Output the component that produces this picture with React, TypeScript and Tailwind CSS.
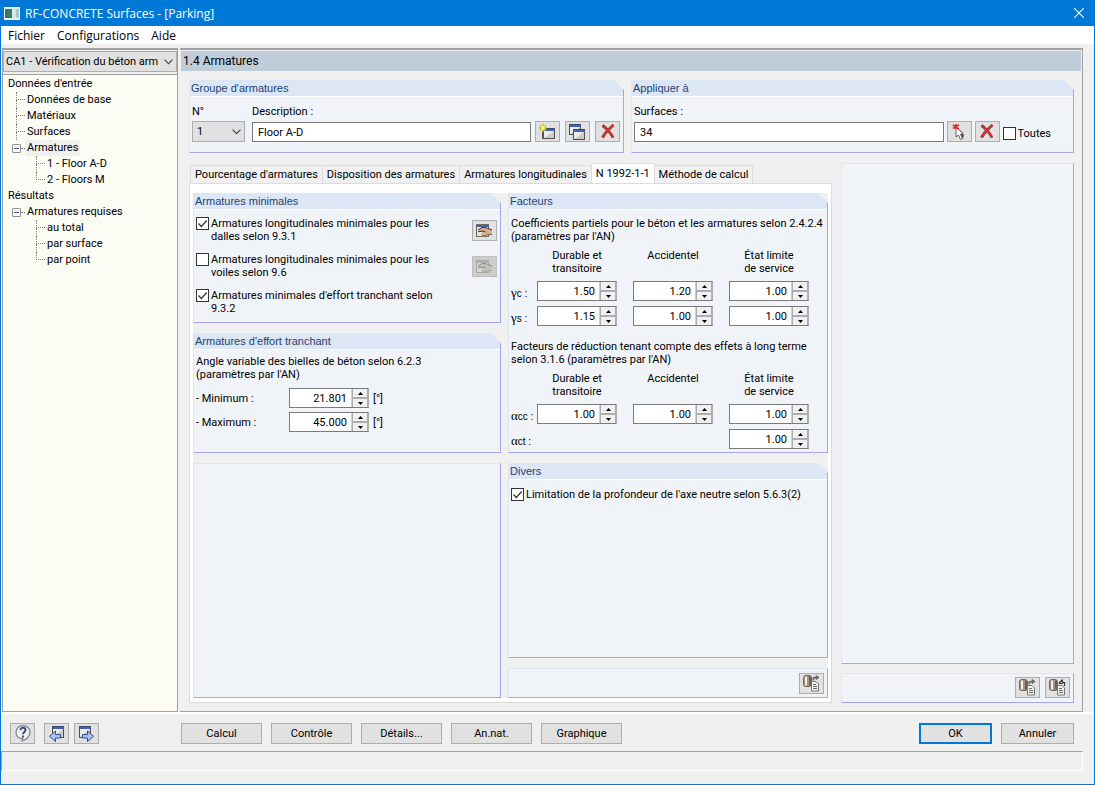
import { useState } from "react";
import type { ReactNode } from "react";
import clsx from "clsx";

const tabs = [
  "Pourcentage d'armatures",
  "Disposition des armatures",
  "Armatures longitudinales",
  "N 1992-1-1",
  "Méthode de calcul",
];

const columns = [
  ["Durable et", "transitoire"],
  ["Accidentel", ""],
  ["État limite", "de service"],
];

const actions = ["Calcul", "Contrôle", "Détails...", "An.nat.", "Graphique"];

/* ---------- icons ---------- */

function AppIcon() {
  return (
    <svg width="16" height="13" viewBox="0 0 16 13">
      <rect x="0.5" y="0.5" width="15" height="12" fill="#e4eef0" stroke="#f4f8fa" />
      <rect x="1" y="2" width="7" height="9" fill="#2f7f68" />
      <path d="M1 2h2.500v9H1z" fill="#4a6670" />
      <path d="M9 2h3v9H9z" fill="#d6e6d6" />
      <path d="M12 2h3v9h-3z" fill="#a9c9c4" />
    </svg>
  );
}

function MiniWindow({ x, y, w = 11, h = 10 }: { x: number; y: number; w?: number; h?: number }) {
  return (
    <g>
      <rect x={x + 0.5} y={y + 0.5} width={w} height={h} fill="#ececec" stroke="#505050" />
      <path d={`M${x + 1} ${y + h}L${x + w} ${y + 3}v${h - 3}z`} fill="#cccccc" />
      <rect x={x + 1} y={y + 0.5} width={w} height="2.5" fill="#4460b4" />
      <path d={`M${x} ${y + 0.5}h${w + 1}`} stroke="#3a4668" />
    </g>
  );
}

function NewIcon() {
  return (
    <svg width="17" height="16" viewBox="0 0 17 16">
      <path d="M3.500 8v6.500H5" fill="none" stroke="#555" />
      <MiniWindow x={4} y={4} />
      <path d="M4 0v8M0 4h8M1.200 1.200l5.600 5.600M6.800 1.200L1.200 6.800" stroke="#b5b820" strokeWidth="1.300" />
      <circle cx="4" cy="4" r="2.200" fill="#f7f25a" />
    </svg>
  );
}

function CopyIcon() {
  return (
    <svg width="17" height="16" viewBox="0 0 17 16">
      <MiniWindow x={0} y={0} />
      <MiniWindow x={4} y={5} />
    </svg>
  );
}

function DeleteIcon() {
  return (
    <svg width="14" height="15" viewBox="0 0 14 15">
      <path d="M1.500 1.500C4 3 10 9 12 13.500M12.500 1C9 4 4 9 1.500 13.500" stroke="#6e2a2a" strokeWidth="2.800" fill="none" />
      <path d="M1.500 1.500C4 3 10 9 12 13.500M12.500 1C9 4 4 9 1.500 13.500" stroke="#dc3434" strokeWidth="1.800" fill="none" />
    </svg>
  );
}

function PickIcon() {
  return (
    <svg width="14" height="16" viewBox="0 0 14 16">
      <path d="M8 6l4 4.500-1 4.500-3-3z" fill="#555" />
      <path d="M4 3v10l2.500-2 2 4.500 2-1-2-4.200 2.500-.8z" fill="#fff" stroke="#555" strokeWidth="0.900" />
      <path d="M.8 1l6 4M7 .8L1 4.500M4 0v5" stroke="#d93030" strokeWidth="1.700" />
    </svg>
  );
}

function HandIcon({ muted = false }: { muted?: boolean }) {
  return (
    <svg width="17" height="14" viewBox="0 0 17 14">
      <rect x="0.500" y="0.500" width="12" height="12" fill={muted ? "#d8d8d6" : "#e6e6e6"} stroke={muted ? "#aaaaa6" : "#6a6a6a"} />
      <path d="M1 1h12v2H1z" fill={muted ? "#b0b0ae" : "#4a63a8"} />
      <path d="M2 6l4-2.500 4 .2 6 2.300v4.500l-4 .2-2.500 1.600H6l-1-2 1.500-2.300L2.500 8z" fill={muted ? "#c2c2be" : "#d9b08c"} />
      <path
        d="M2 6l4-2.500 4 .2 6 2.300M2.200 7.800L7 7l2.500 1"
        stroke={muted ? "#8e8e8a" : "#43332a"}
        fill="none"
      />
      <path d="M6 11.800h3.500l2.500-1.300 4 .2" stroke={muted ? "#a2a29e" : "#7c604a"} fill="none" />
    </svg>
  );
}

function ReportIcon({ up = false }: { up?: boolean }) {
  return (
    <svg width="17" height="17" viewBox="0 0 17 17">
      <rect x="0.500" y="0.500" width="8" height="11" rx="2.500" fill="#a39382" stroke="#6d645c" />
      <path d="M3 1.500v9" stroke="#fffaf0" strokeWidth="1.800" />
      <path d="M7 1.500v9" stroke="#5c5148" strokeWidth="1.500" />
      <path d="M8.500 6.500h4.500l2.500 2.500v7h-7z" fill="#f4f4f4" stroke="#777" />
      <path d="M10 9.500h3M10 11.500h4M10 13.500h4" stroke="#666" />
      {up ? (
        <path d="M10 4.500l3-3.500 1 2.500h1.500V7M10 4.500h4" stroke="#333" strokeWidth="1.200" fill="none" />
      ) : (
        <path d="M10 5.500v-3h3M13 .5v4l3-2z" stroke="#666" fill="#777" />
      )}
    </svg>
  );
}

function HelpIcon() {
  return (
    <svg width="16" height="17" viewBox="0 0 16 17">
      <path d="M8 .7c4 0 7 2.700 7 6.500 0 4-3 7-8.500 9 1-1 1.500-1.700 1.300-2.500C3.500 13.500 1 11 1 7.300 1 3.500 4 .7 8 .7z" fill="#f0f0f0" stroke="#858585" strokeWidth="1.300" />
      <path d="M5.500 5.200C5.500 3.500 6.600 2.800 8 2.800s2.500.8 2.500 2.200C10.500 7 8 7 8 9.200M8 10.500v2" fill="none" stroke="#34477f" strokeWidth="1.900" />
    </svg>
  );
}

function StepIcon({ next = false }: { next?: boolean }) {
  return (
    <svg width="17" height="16" viewBox="0 0 17 16">
      <MiniWindow x={next ? 1 : 4} y={0} w={11} h={11} />
      <path
        d={next ? "M4.500 8.500h5v-3.500l6 5.300-6 5.200v-3.500h-5z" : "M12.500 8.500h-5v-3.500l-6 5.300 6 5.200v-3.500h5z"}
        fill="#a9c2f2"
        stroke="#2f4c90"
      />
    </svg>
  );
}

function Chevron() {
  return (
    <svg width="9" height="6" viewBox="0 0 9 6" className="pointer-events-none absolute right-1 top-1/2 -translate-y-1/2">
      <path d="M0.500 0.700l4 4 4-4" fill="none" stroke="#444" strokeWidth="1.100" />
    </svg>
  );
}

/* ---------- controls ---------- */

function ToolButton({ label, disabled, children }: { label: string; disabled?: boolean; children: ReactNode }) {
  return (
    <button
      type="button"
      aria-label={label}
      disabled={disabled}
      className={clsx(
        "flex h-[21px] w-[25px] shrink-0 items-center justify-center border",
        disabled ? "border-[#bfbfbf] bg-[#cccccc]" : "border-[#adadad] bg-[#e1e1e1]"
      )}
    >
      {children}
    </button>
  );
}

function PushButton({ children, primary }: { children: ReactNode; primary?: boolean }) {
  return (
    <button
      type="button"
      className={clsx("h-[21px] min-w-[73px] bg-[#e1e1e1]", primary ? "border-2 border-[#0078d7]" : "border border-[#adadad]")}
    >
      {children}
    </button>
  );
}

function Check({ id, checked = false, children }: { id: string; checked?: boolean; children: ReactNode }) {
  return (
    <div className="flex gap-[2px]">
      <span className="relative size-[13px] shrink-0">
        <input
          id={id}
          type="checkbox"
          defaultChecked={checked}
          className="peer block size-[13px] appearance-none border border-[#333] bg-white"
        />
        <svg viewBox="0 0 13 13" className="pointer-events-none absolute inset-0 hidden peer-checked:block">
          <path d="M2.500 6.500l2.800 3 5.400-6" fill="none" stroke="#333" strokeWidth="1.200" />
        </svg>
      </span>
      <label htmlFor={id}>{children}</label>
    </div>
  );
}

function Spin({ label, value, step = 0.01 }: { label: string; value: string; step?: number }) {
  const [v, setV] = useState(value);
  const digits = value.split(".")[1].length;
  const bump = (d: number) => setV((Number(v) + d).toFixed(digits));

  return (
    <div className="flex h-5 w-20 border border-[#7a7a7a] border-r-[#adadad] bg-white">
      <input
        aria-label={label}
        value={v}
        onChange={(e) => setV(e.target.value)}
        className="w-full min-w-0 flex-1 pr-1 text-right outline-none"
      />
      <div className="flex w-[17px] shrink-0 flex-col border-l border-[#d0d0d0] bg-[#f0f0f0]">
        <button type="button" aria-label={`${label} +`} onClick={() => bump(step)} className="flex flex-1 items-center justify-center border-x border-b border-[#adadad]">
          <svg width="5" height="3" viewBox="0 0 5 3"><path d="M0 3L2.500 0 5 3z" /></svg>
        </button>
        <button type="button" aria-label={`${label} -`} onClick={() => bump(-step)} className="flex flex-1 items-center justify-center border-x border-t border-[#adadad]">
          <svg width="5" height="3" viewBox="0 0 5 3"><path d="M0 0h5L2.500 3z" /></svg>
        </button>
      </div>
    </div>
  );
}

function Group({ title, className, children }: { title?: string; className?: string; children?: ReactNode }) {
  return (
    <section
      className={clsx(
        "flex flex-col border-b border-l border-r border-b-[#a6a6ee] border-l-[#dce6f5] border-r-[#a6a6ee] bg-[#f0f4f9]",
        title ? "[clip-path:polygon(0_0,calc(100%-10px)_0,100%_10px,100%_100%,0_100%)]" : "border-t border-t-[#dce6f5]",
        className
      )}
    >
      {title && (
        <h2 className="h-[17px] border-b border-white bg-[#dce6f5] pl-px font-['Liberation_Sans',sans-serif] leading-4 text-[#1e4471]">
          {title}
        </h2>
      )}
      {children}
    </section>
  );
}

/* ---------- navigation tree ---------- */

function Branch({ last = false }: { last?: boolean }) {
  return (
    <span className="flex h-4 w-[9px] shrink-0 flex-col">
      <span className="h-2 border-b border-l border-dotted border-[#808080]" />
      <span className={clsx("h-2", !last && "border-l border-dotted border-[#808080]")} />
    </span>
  );
}

function Leaf({ children, last }: { children: ReactNode; last?: boolean }) {
  return (
    <li className="flex h-4 items-center">
      <Branch last={last} />
      <a href="#" className="px-[2px]">{children}</a>
    </li>
  );
}

function Parent({ label, active, children }: { label: string; active?: boolean; children: ReactNode }) {
  return (
    <li className="-ml-1">
      <div className="flex h-4 items-center">
        <button type="button" aria-label={`Réduire ${label}`} className="flex size-[9px] items-center justify-center rounded-[1px] border border-[#919191] bg-white">
          <span className="h-px w-[5px] bg-[#3a55a0]" />
        </button>
        <span className="w-1 border-b border-dotted border-[#808080]" />
        <a href="#" className={clsx("px-[2px] leading-4", active && "bg-[#f0f0f0]")}>{label}</a>
      </div>
      <ul className="ml-6">{children}</ul>
    </li>
  );
}

function Sidebar() {
  return (
    <aside className="flex w-44 shrink-0 flex-col border border-t-2 border-[#a0a0a0] bg-[#f0f0f0]">
      <div className="relative mt-px mb-[2px]">
        <select aria-label="Cas d'étude" className="block h-[21px] w-full appearance-none border border-[#adadad] bg-[#e1e1e1] pr-4 pl-[2px]">
          <option>CA1 - Vérification du béton arm</option>
        </select>
        <Chevron />
      </div>
      <nav className="flex-1 border-t border-[#a0a0a0] bg-[#fcfcf4] pt-px pl-[5px]">
        <ul className="leading-4">
          <li>
            Données d'entrée
            <ul className="ml-2">
              <Leaf>Données de base</Leaf>
              <Leaf>Matériaux</Leaf>
              <Leaf>Surfaces</Leaf>
              <Parent label="Armatures" active>
                <Leaf>1 - Floor A-D</Leaf>
                <Leaf last>2 - Floors M</Leaf>
              </Parent>
            </ul>
          </li>
          <li>
            Résultats
            <ul className="ml-2">
              <Parent label="Armatures requises">
                <Leaf>au total</Leaf>
                <Leaf>par surface</Leaf>
                <Leaf last>par point</Leaf>
              </Parent>
            </ul>
          </li>
        </ul>
      </nav>
    </aside>
  );
}

/* ---------- forms ---------- */

function Symbol({ letter, sub }: { letter: string; sub: string }) {
  return (
    <span className="flex items-baseline self-center">
      <span className="font-['Liberation_Serif',serif] text-[13px]">{letter}</span>
      <span className="pt-1 font-['Liberation_Sans',sans-serif] text-[10px]">{sub}&nbsp;:</span>
    </span>
  );
}

type Row = { letter: string; sub: string; values: (string | null)[] };

function FactorGrid({ rows }: { rows: Row[] }) {
  return (
    <div className="mt-[6px] grid grid-cols-[10px_80px_80px_80px] gap-x-4 gap-y-[5px]">
      <span />
      {columns.map(([a, b]) => (
        <span key={a} className="pb-px text-center">
          {a}
          <br />
          {b}
        </span>
      ))}
      {rows.map(({ letter, sub, values }) => [
        <Symbol key={sub} letter={letter} sub={sub} />,
        ...values.map((v, i) =>
          v ? <Spin key={sub + i} label={`${letter}${sub} ${columns[i].join(" ")}`} value={v} /> : <span key={sub + i} />
        ),
      ])}
    </div>
  );
}

function Factors() {
  return (
    <Group title="Facteurs" className="h-[260px]">
      <div className="pt-[7px] pl-[2px] whitespace-nowrap">
        <p>
          Coefficients partiels pour le béton et les armatures selon 2.4.2.4
          <br />
          (paramètres par l'AN)
        </p>
        <FactorGrid
          rows={[
            { letter: "γ", sub: "c", values: ["1.50", "1.20", "1.00"] },
            { letter: "γ", sub: "s", values: ["1.15", "1.00", "1.00"] },
          ]}
        />
        <p className="mt-[14px]">
          Facteurs de réduction tenant compte des effets à long terme
          <br />
          selon 3.1.6 (paramètres par l'AN)
        </p>
        <FactorGrid
          rows={[
            { letter: "α", sub: "cc", values: ["1.00", "1.00", "1.00"] },
            { letter: "α", sub: "ct", values: [null, null, "1.00"] },
          ]}
        />
      </div>
    </Group>
  );
}

function Shear() {
  return (
    <Group title="Armatures d'effort tranchant" className="h-[120px]">
      <div className="px-[2px] pt-[5px]">
        <p>
          Angle variable des bielles de béton selon 6.2.3
          <br />
          (paramètres par l'AN)
        </p>
        <div className="mt-[7px] grid grid-cols-[93px_80px_auto] items-center gap-y-1">
          <span>- Minimum :</span>
          <Spin label="Minimum" value="21.801" step={1} />
          <span className="pl-1">[°]</span>
          <span>- Maximum :</span>
          <Spin label="Maximum" value="45.000" step={1} />
          <span className="pl-1">[°]</span>
        </div>
      </div>
    </Group>
  );
}

function Minimal() {
  return (
    <Group title="Armatures minimales" className="h-[130px]">
      <div className="flex flex-col pt-[7px] pr-[3px] pl-[2px]">
        <div className="flex h-9 items-start justify-between">
          <Check id="slabs" checked>
            Armatures longitudinales minimales pour les
            <br />
            dalles selon 9.3.1
          </Check>
          <div className="pt-[3px]">
            <ToolButton label="Modifier dalles"><HandIcon /></ToolButton>
          </div>
        </div>
        <div className="flex h-9 items-start justify-between">
          <Check id="walls">
            Armatures longitudinales minimales pour les
            <br />
            voiles selon 9.6
          </Check>
          <div className="pt-[3px]">
            <ToolButton label="Modifier voiles" disabled><HandIcon muted /></ToolButton>
          </div>
        </div>
        <Check id="shear" checked>
          Armatures minimales d'effort tranchant selon
          <br />
          9.3.2
        </Check>
      </div>
    </Group>
  );
}

function TopGroups() {
  return (
    <div className="grid grid-cols-[435fr_443fr] gap-[7px]">
      <Group title="Groupe d'armatures" className="h-[73px]">
        <div className="flex items-end gap-[7px] pt-2 pr-[3px] pl-[2px]">
          <div className="w-[53px]">
            <label htmlFor="no">N°</label>
            <div className="relative mt-[3px]">
              <select id="no" className="block h-[21px] w-full appearance-none border border-[#adadad] bg-[#e1e1e1] pl-1">
                <option>1</option>
              </select>
              <Chevron />
            </div>
          </div>
          <div className="flex-1">
            <label htmlFor="desc">Description :</label>
            <input id="desc" defaultValue="Floor A-D" className="mt-1 block h-5 w-full border border-[#7a7a7a] bg-white px-[5px]" />
          </div>
          <div className="-ml-[3px] flex gap-[5px]">
            <ToolButton label="Nouveau"><NewIcon /></ToolButton>
            <ToolButton label="Copier"><CopyIcon /></ToolButton>
            <ToolButton label="Supprimer"><DeleteIcon /></ToolButton>
          </div>
        </div>
      </Group>
      <Group title="Appliquer à" className="h-[73px]">
        <div className="flex items-end gap-[3px] pt-2 pr-[22px] pl-[2px]">
          <div className="flex-1">
            <label htmlFor="surfaces">Surfaces :</label>
            <input id="surfaces" defaultValue="34" className="mt-1 block h-5 w-full border border-[#7a7a7a] bg-white px-[5px]" />
          </div>
          <ToolButton label="Sélectionner"><PickIcon /></ToolButton>
          <ToolButton label="Effacer"><DeleteIcon /></ToolButton>
          <div className="pb-[2px]">
            <Check id="all">Toutes</Check>
          </div>
        </div>
      </Group>
    </div>
  );
}

function Workspace() {
  const [active, setActive] = useState(3);

  return (
    <main className="flex min-w-0 flex-1 flex-col border-t-2 border-r border-b border-[#a0a0a0]">
      <h1 className="mx-px mt-px h-5 bg-[#bfcddb] pl-[2px] text-[12px] leading-5">1.4 Armatures</h1>
      <div className="flex flex-1 flex-col gap-[10px] pt-[9px] pr-2 pb-2 pl-[9px]">
        <TopGroups />
        <div className="flex flex-1 gap-[9px]">
          <div className="flex min-w-0 flex-1 flex-col">
            <div role="tablist" className="flex items-end pl-px">
              {tabs.map((t, i) => (
                <button
                  key={t}
                  type="button"
                  role="tab"
                  aria-selected={i === active}
                  onClick={() => setActive(i)}
                  className={clsx(
                    "border-t border-r border-[#dcdcdc] px-1 whitespace-nowrap",
                    i === active ? "-mb-px h-[21px] bg-white pb-[2px]" : "h-[18px]",
                    i === 0 && "border-l"
                  )}
                >
                  {t}
                </button>
              ))}
            </div>
            <div className="flex flex-1 border border-[#dcdcdc] bg-white pt-[9px] pr-[3px] pb-1 pl-[3px]">
              <div className="grid flex-1 grid-cols-[minmax(0,308fr)_minmax(0,320fr)] gap-[7px] bg-[#f0f0f0]">
                <div className="flex flex-col gap-[10px]">
                  <Minimal />
                  <Shear />
                  <Group className="flex-1" />
                </div>
                <div className="flex flex-col gap-[10px]">
                  <Factors />
                  <Group title="Divers" className="flex-1">
                    <div className="pt-2 pl-[2px]">
                      <Check id="axis" checked>
                        Limitation de la profondeur de l'axe neutre selon 5.6.3(2)
                      </Check>
                    </div>
                  </Group>
                  <Group className="h-[30px]">
                    <div className="flex justify-end pt-1 pr-[3px]">
                      <ToolButton label="Valeurs par défaut"><ReportIcon /></ToolButton>
                    </div>
                  </Group>
                </div>
              </div>
            </div>
          </div>
          <div className="flex w-[233px] shrink-0 flex-col gap-[9px]">
            <Group className="flex-1" />
            <Group className="h-[30px]">
              <div className="flex justify-end gap-[5px] pt-[3px] pr-[3px]">
                <ToolButton label="Charger"><ReportIcon /></ToolButton>
                <ToolButton label="Enregistrer"><ReportIcon up /></ToolButton>
              </div>
            </Group>
          </div>
        </div>
      </div>
    </main>
  );
}

export default function App() {
  return (
    <div className="flex min-h-screen flex-col border border-t-0 border-[#0078d7] bg-[#f0f0f0] font-['Roboto',sans-serif] text-[11px] leading-[13px] text-black">
      <header className="font-['Open_Sans',sans-serif] text-[12px]">
        <div className="flex h-[26px] items-center gap-[5px] bg-[#0078d7] px-[3px] text-white">
          <AppIcon />
          <span className="flex-1">RF-CONCRETE Surfaces - [Parking]</span>
          <button type="button" aria-label="Fermer" className="mr-[7px]">
            <svg width="10" height="10" viewBox="0 0 10 10">
              <path d="M0 0l10 10M10 0L0 10" stroke="#fff" strokeWidth="1.100" />
            </svg>
          </button>
        </div>
        <nav className="flex h-[18px] items-center gap-3 bg-white pt-px pl-[7px]">
          <button type="button">Fichier</button>
          <button type="button">Configurations</button>
          <button type="button">Aide</button>
        </nav>
      </header>

      <div className="flex flex-1 gap-[2px] border-b-2 border-white pt-1 pr-[11px] pl-px">
        <Sidebar />
        <Workspace />
      </div>

      <footer>
        <div className="flex gap-[9px] pt-[9px] pr-5 pl-[9px]">
          <ToolButton label="Aide"><HelpIcon /></ToolButton>
          <div className="flex w-32 gap-[5px]">
            <ToolButton label="Précédent"><StepIcon /></ToolButton>
            <ToolButton label="Suivant"><StepIcon next /></ToolButton>
          </div>
          <div className="grid grid-cols-[repeat(5,81px)] gap-[9px]">
            {actions.map((a) => (
              <PushButton key={a}>{a}</PushButton>
            ))}
          </div>
          <div className="ml-auto flex gap-[9px]">
            <PushButton primary>OK</PushButton>
            <PushButton>Annuler</PushButton>
          </div>
        </div>
        <div className="mt-[7px] mr-[11px] mb-[13px] h-5 border border-t-[#a0a0a0] border-r-white border-b-white border-l-[#a0a0a0]" />
      </footer>
    </div>
  );
}
